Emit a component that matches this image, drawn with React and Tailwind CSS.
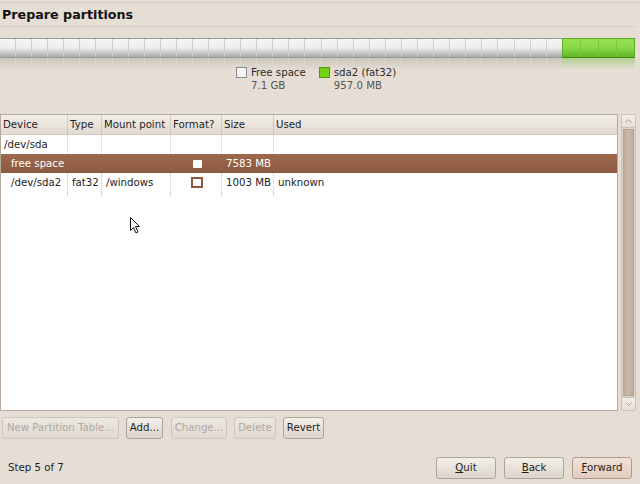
import React from "react";

const font = { fontFamily: '"DejaVu Sans", "Liberation Sans", sans-serif' };

function Btn({ children, disabled, primary, w }) {
  return (
    <div
      className={`flex items-center justify-center h-[22px] rounded-[3px] border text-[10.2px] ${w} ${
        disabled
          ? "border-[#cfc6bb] text-[#b0a89e] bg-gradient-to-b from-[#ece7e1] to-[#e2dad1]"
          : primary
          ? "border-[#b09a8b] text-[#1e1e1e] bg-gradient-to-b from-[#f0e2d9] to-[#e2cbbe]"
          : "border-[#b0a497] text-[#1e1e1e] bg-gradient-to-b from-[#f3efeb] to-[#ddd4ca]"
      }`}
    >
      {children}
    </div>
  );
}

const cols = [
  "w-[66px]",
  "w-[34px]",
  "w-[69px]",
  "w-[51px]",
  "w-[52px]",
  "flex-1",
];

function Row({ cells, selected }) {
  return (
    <div
      className={`flex h-[19px] items-center text-[10.2px] ${
        selected
          ? "bg-gradient-to-b from-[#9e684c] to-[#8b5a41] text-white"
          : "text-[#222]"
      }`}
    >
      {cells.map((c, i) => (
        <div
          key={i}
          className={`${cols[i]} h-full flex items-center whitespace-nowrap ${
            i > 0 && !selected ? "border-l border-dotted border-[#c4c4c4]" : ""
          } ${i > 0 && selected ? "border-l border-transparent" : ""}`}
        >
          {c}
        </div>
      ))}
    </div>
  );
}

export default function App() {
  const whiteSegs = Array.from({ length: 35 });
  const greenSegs = Array.from({ length: 4 });
  return (
    <div
      className="w-[640px] h-[484px] bg-[#e6ded5] relative overflow-hidden flex flex-col"
      style={font}
    >
      <div className="h-[2px]" />
      <div className="h-px bg-[#d6ccc1]" />
      <div className="h-[23px] flex items-center pl-[2px] text-[12.7px] font-bold text-[#111]">
        Prepare partitions
      </div>
      <div className="h-px bg-[#d6ccc1] mr-[5px]" />
      <div className="h-[11px]" />
      {/* partition bar */}
      <div className="flex w-[635px] h-[20px]">
        <div className="flex w-[562px] h-full border-t border-b border-[#9a9a9a] bg-gradient-to-b from-[#f6f6f6] via-[#ececec] to-[#a8a8a8]">
          {whiteSegs.map((_, i) => (
            <div key={i} className="flex-1 border-r border-[#cfcfcf] last:border-r-0" />
          ))}
        </div>
        <div className="flex flex-1 h-full border border-b-[#3f8a12] border-[#5cab23] bg-gradient-to-b from-[#96e352] via-[#88d846] to-[#62b527]">
          {greenSegs.map((_, i) => (
            <div key={i} className="flex-1 border-r border-[#7cc542] last:border-r-0" />
          ))}
        </div>
      </div>
      <div className="flex w-[635px] h-[12px]">
        <div className="flex w-[562px] h-full bg-gradient-to-b from-[#cbc4bc] to-[#e6ded5]">
          {whiteSegs.map((_, i) => (
            <div key={i} className="flex-1 border-r border-[#ddd5cc] last:border-r-0" />
          ))}
        </div>
        <div className="flex-1 h-full bg-gradient-to-b from-[#b3cf93] to-[#e6ded5]" />
      </div>
      {/* legend */}
      <div className="flex text-[10.2px] leading-[13px] -mt-[4px] h-[30px]">
        <div className="ml-[236px] flex">
          <div className="w-[11px] h-[11px] mt-[1px] border border-[#8c8c8c] bg-[#f4f4f4]" />
          <div className="ml-[4px]">
            <div className="text-[#2a2a2a]">Free space</div>
            <div className="text-[#555]">7.1 GB</div>
          </div>
        </div>
        <div className="ml-[13px] flex">
          <div className="w-[11px] h-[11px] mt-[1px] border border-[#4e9a06] bg-[#73d216]" />
          <div className="ml-[4px]">
            <div className="text-[#2a2a2a]">sda2 (fat32)</div>
            <div className="text-[#555]">957.0 MB</div>
          </div>
        </div>
      </div>
      <div className="h-[18px]" />
      {/* table + scrollbar */}
      <div className="flex h-[297px]">
        <div className="w-[618px] h-full border border-[#b6a999] bg-white flex flex-col">
          <div className="flex h-[20px] items-center text-[10.2px] text-[#1e1e1e] bg-gradient-to-b from-[#f2eee9] to-[#e2dad1] border-b border-[#d4c9bd]">
            {["Device", "Type", "Mount point", "Format?", "Size", "Used"].map(
              (h, i) => (
                <div
                  key={h}
                  className={`${cols[i]} h-full flex items-center pl-[2px] whitespace-nowrap ${
                    i > 0 ? "border-l border-[#d2c7bb]" : ""
                  }`}
                >
                  {h}
                </div>
              )
            )}
          </div>
          <Row cells={[<span className="pl-[3px]">/dev/sda</span>, "", "", "", "", ""]} />
          <Row
            selected
            cells={[
              <span className="pl-[10px]">free space</span>,
              "",
              "",
              <div className="w-full flex justify-center">
                <div className="w-[9px] h-[8px] bg-white rounded-[1px] ml-[2px]" />
              </div>,
              <span className="pl-[4px]">7583 MB</span>,
              "",
            ]}
          />
          <Row
            cells={[
              <span className="pl-[10px]">/dev/sda2</span>,
              <span className="pl-[4px]">fat32</span>,
              <span className="pl-[4px]">/windows</span>,
              <div className="w-full flex justify-center">
                <div className="w-[12px] h-[11px] border-2 border-[#8b5a41] bg-white ml-[2px]" />
              </div>,
              <span className="pl-[4px]">1003 MB</span>,
              <span className="pl-[4px]">unknown</span>,
            ]}
          />
          <div className="flex h-[4px]">
            {cols.map((c, i) => (
              <div
                key={i}
                className={`${c} h-full ${i > 0 ? "border-l border-dotted border-[#c4c4c4]" : ""}`}
              />
            ))}
          </div>
        </div>
        <div className="ml-[3px] w-[15px] h-full border border-[#cdc2b6] bg-[#ddd4ca] flex flex-col rounded-[2px]">
          <div className="h-[13px] flex items-center justify-center bg-gradient-to-b from-[#f2eee9] to-[#e6dfd7] border-b border-[#cdc2b6]">
            <svg width="7" height="4" viewBox="0 0 7 4">
              <path d="M0.5 3.5 L3.5 0.5 L6.5 3.5" fill="none" stroke="#a89a8c" strokeWidth="1" />
            </svg>
          </div>
          <div className="flex-1 mx-[1px] my-[1px] border border-[#b5a494] bg-gradient-to-r from-[#bcab9b] via-[#c9b9aa] to-[#bcab9b]" />
          <div className="h-[13px] flex items-center justify-center bg-gradient-to-b from-[#f2eee9] to-[#e6dfd7] border-t border-[#cdc2b6]">
            <svg width="7" height="4" viewBox="0 0 7 4">
              <path d="M0.5 0.5 L3.5 3.5 L6.5 0.5" fill="none" stroke="#a89a8c" strokeWidth="1" />
            </svg>
          </div>
        </div>
      </div>
      {/* action buttons */}
      <div className="flex mt-[6px] pl-[2px]">
        <Btn disabled w="w-[117px]">New Partition Table...</Btn>
        <div className="w-[7px]" />
        <Btn w="w-[37px]">Add...</Btn>
        <div className="w-[8px]" />
        <Btn disabled w="w-[56px]">Change...</Btn>
        <div className="w-[7px]" />
        <Btn disabled w="w-[42px]">Delete</Btn>
        <div className="w-[7px]" />
        <Btn w="w-[41px]">Revert</Btn>
      </div>
      {/* bottom */}
      <div className="flex items-center mt-[18px] pl-[8px] pr-[8px]">
        <div className="text-[10.2px] text-[#1e1e1e] flex-1">Step 5 of 7</div>
        <div className="flex gap-[8px]">
          <Btn w="w-[60px]">
            <span><span className="underline">Q</span>uit</span>
          </Btn>
          <Btn w="w-[60px]">
            <span><span className="underline">B</span>ack</span>
          </Btn>
          <Btn primary w="w-[60px]">
            <span><span className="underline">F</span>orward</span>
          </Btn>
        </div>
      </div>
      {/* mouse cursor */}
      <svg
        className="absolute left-[130px] top-[217px]"
        width="12"
        height="18"
        viewBox="0 0 12 18"
      >
        <path
          d="M0.5 0.5 L0.5 13.5 L3.5 10.5 L6 16 L8 15 L5.5 9.5 L9.5 9.5 Z"
          fill="#fff"
          stroke="#111"
          strokeWidth="1"
          strokeLinejoin="round"
        />
      </svg>
    </div>
  );
}
